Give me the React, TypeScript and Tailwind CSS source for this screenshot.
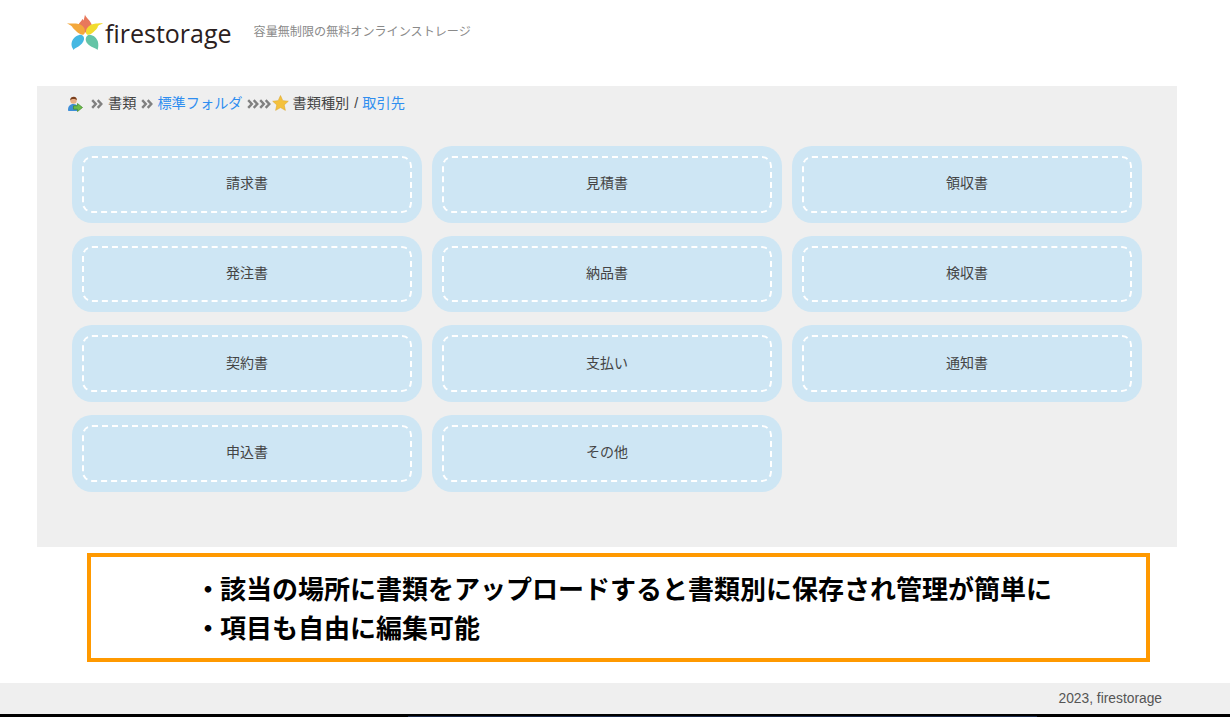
const DOC_TYPES = ['請求書', '見積書', '領収書', '発注書', '納品書', '検収書', '契約書', '支払い', '通知書', '申込書', 'その他'];

const FONT = "font-['Liberation_Sans','Noto_Sans_CJK_JP',sans-serif]";

function Logo() {
  return (
    <svg width="36" height="36" viewBox="0 0 36 36" className="shrink-0">
      <path d="M18 .5c.5 3 5.800 6 6.800 10.500 .7 3.700-2.800 7.500-6.600 7.500-4 0-7.400-3.800-6.600-7.500 .5-2.500 2.800-3.500 3.800-6 .5 .5 1 1 1.200 1.500 .5-2 1.100-4 1.400-6z" fill="#e8785c" />
      <path d="M36 9c-1.500 1.500-3.500 1.500-5 3-.5 3-3 4.500-4.500 6-2 1.800-4.500 3.500-6.500 2.500-1.500-1-1.500-4.300 0-6.300 2-3 5.500-4.500 9-4.700 2.200-.2 4.500 0 7-.5z" fill="#f2dc2e" />
      <path d="M0 9c2.500 1 6 .2 9 .5 3.500 .3 6.800 1.700 8.300 4.700 1 2 .9 5.300-.6 6.300-2.200 .8-4.700-1-6.700-2.500C8 16 6 14.500 5 12.500 3.500 11 1.500 10.500 0 9z" fill="#f4a83c" />
      <path d="M6.500 36c-.5-1.500-2-3-2-5.500 0-4.500 3.300-8.800 7.800-9.600 3-.3 5.200 1.800 4.700 4.700-.5 3-3 5.200-5.500 7-1.800 1.200-3.800 1.700-5 3.400z" fill="#45b8e2" />
      <path d="M30.500 36c-1-1.500-4-2-6-3.300-3-1.700-5.800-4-5.800-7.400 0-2.700 2.200-4.700 4.800-4.400 3.500 .3 6.300 3.300 7.300 6.400 .8 3 .7 6.200-.3 8.700z" fill="#64c4a6" />
    </svg>
  );
}

function UserIcon() {
  return (
    <svg width="16" height="16" viewBox="0 0 16 16" className="shrink-0">
      <circle cx="6.500" cy="4.500" r="3.200" fill="#e8b088" />
      <path d="M3.200 4.500C3 1.800 5 .8 6.800 .8c2 0 3.200 1.300 3 3.500C9 3 7 2.800 5.500 3 4.500 3.200 3.800 3.800 3.200 4.500z" fill="#7a3f1d" />
      <path d="M1 14c0-3.500 1.800-6 5.500-6 2 0 3.200 .8 4 2v5H2c-.6 0-1-.4-1-1z" fill="#3f8fd8" />
      <path d="M6.500 9.800h4V7.500L15.500 11.500l-5 4v-2.300h-4z" fill="#6dbb4a" stroke="#3d8a2a" strokeWidth="0.700" />
    </svg>
  );
}

function Chevrons() {
  return (
    <svg width="13" height="10" viewBox="0 0 13 10" className="shrink-0">
      <path d="M1.200 1.200 4.800 5 1.200 8.800M6.700 1.200 10.300 5 6.700 8.800" fill="none" stroke="#808080" strokeWidth="2.400" />
    </svg>
  );
}

function Star() {
  return (
    <svg width="17" height="16" viewBox="0 0 24 23" className="shrink-0 -mt-[2px]">
      <path
        d="M12 .8l3.300 7.300 7.900 .9-5.900 5.300 1.700 7.800L12 18.100l-7 4 1.700-7.800L.8 9l7.900-.9z"
        fill="#f4c13c"
        stroke="#dca62a"
        strokeWidth="0.800"
      />
    </svg>
  );
}

export default function App() {
  return (
    <div className={`w-[1230px] h-[717px] bg-white overflow-hidden flex flex-col ${FONT}`}>
      <header className="h-[86px] pl-[67px] pt-[14px] flex items-start shrink-0">
        <Logo />
        <span className="ml-[2px] mt-[1px] text-[25px] leading-[36px] text-[#2b2020] font-['Open_Sans',sans-serif]">firestorage</span>
        <span className="ml-[22px] mt-[10px] text-[12.1px] leading-[16px] text-[#8a8a8a]">容量無制限の無料オンラインストレージ</span>
      </header>

      <main className="mx-[37px] w-[1140px] h-[461px] bg-[#efefef] shrink-0">
        <div className="pl-[30px] h-[36px] flex items-center text-[14.2px] text-[#444] pb-[1px]">
          <UserIcon />
          <span className="ml-[8px] flex"><Chevrons /></span>
          <span className="ml-[4px]">書類</span>
          <span className="ml-[5px] flex"><Chevrons /></span>
          <span className="ml-[3px] text-[#2f8ef0]">標準フォルダ</span>
          <span className="ml-[4px] flex"><Chevrons /></span>
          <span className="flex -ml-[1px]"><Chevrons /></span>
          <Star />
          <span className="ml-[4px]">書類種別</span>
          <span className="ml-[5px]">/</span>
          <span className="ml-[4px] text-[#2f8ef0]">取引先</span>
        </div>

        <div className="ml-[35px] mt-[24px] grid grid-cols-[350px_350px_350px] gap-x-[10px] gap-y-[13px]">
          {DOC_TYPES.map((name) => (
            <div key={name} className="h-[76.67px] rounded-[20px] bg-[#cee6f4] p-[10px]">
              <div className="h-full rounded-[10px] border-2 border-dashed border-white flex items-center justify-center text-sm text-[#444] pb-[2px]">
                {name}
              </div>
            </div>
          ))}
        </div>
      </main>

      <section className="ml-[87px] mt-[6px] w-[1063px] h-[109px] border-4 border-[#ff9900] shrink-0 pl-[104px] pt-[14px] text-[26px] leading-[39px] font-bold text-black">
        <p className="flex"><span className="w-[25px]">・</span><span>該当の場所に書類をアップロードすると書類別に保存され管理が簡単に</span></p>
        <p className="flex"><span className="w-[25px]">・</span><span>項目も自由に編集可能</span></p>
      </section>

      <footer className="mt-[21px] h-[31px] bg-[#efefef] shrink-0 flex items-center justify-end pr-[68px] pt-[1px] text-[13.8px] text-[#555]">
        2023, firestorage
      </footer>
      <div className="h-[3px] bg-black shrink-0 flex items-end pl-[408px]">
        <div className="w-[629px] h-[1px] bg-[#1c2a4a]" />
      </div>
    </div>
  );
}
